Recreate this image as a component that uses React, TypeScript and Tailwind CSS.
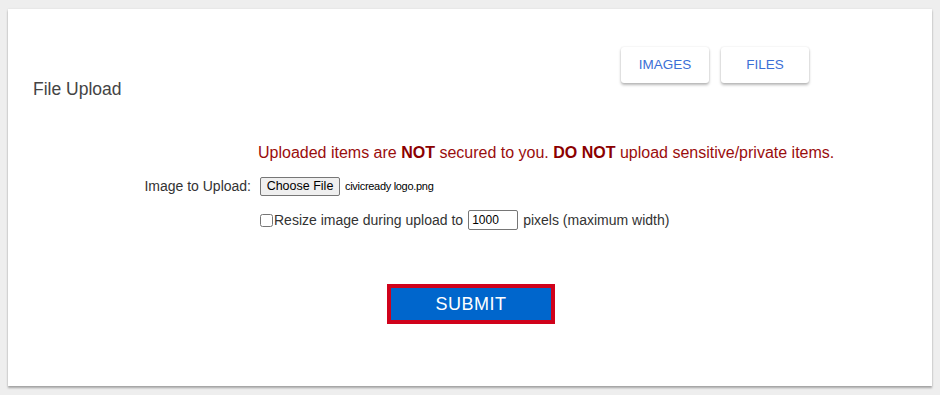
export default function App() {
  return (
    <div className="min-h-screen bg-[#eeeeee] px-[8px] pt-[9px] font-['Liberation_Sans',Arial,sans-serif]">
      <div className="h-[377px] w-[924px] bg-white shadow-[0_2px_2px_rgba(0,0,0,0.3),0_0_2px_rgba(0,0,0,0.08)]">
        {/* Header */}
        <div className="flex pt-[38px]">
          <h1 className="pl-[25px] pt-[32px] text-[17.5px] leading-[20px] text-[#444]">File Upload</h1>
          <div className="ml-auto mr-[123px] flex gap-[12px]">
            <button className="h-[36px] w-[88px] rounded-[3px] bg-white text-[13.5px] text-[#3b6fd6] shadow-[0_2px_3px_rgba(0,0,0,0.28),0_0_2px_rgba(0,0,0,0.1)]">
              IMAGES
            </button>
            <button className="h-[36px] w-[88px] rounded-[3px] bg-white text-[13.5px] text-[#3b6fd6] shadow-[0_2px_3px_rgba(0,0,0,0.28),0_0_2px_rgba(0,0,0,0.1)]">
              FILES
            </button>
          </div>
        </div>

        {/* Warning */}
        <p className="mt-[45px] pl-[250px] text-[16px] leading-[18px] text-[#9a0d0d]">
          Uploaded items are <b className="text-[#8b0000]">NOT</b> secured to you.{' '}
          <b className="text-[#8b0000]">DO NOT</b> upload sensitive/private items.
        </p>

        {/* Form rows */}
        <div className="mt-[14px] grid grid-cols-[243px_1fr] items-center gap-x-[9px] gap-y-[14px] text-[14px] text-[#333]">
          <label className="text-right leading-[20px]">Image to Upload:</label>
          <div className="flex h-[20px] items-center gap-[5px]">
            <button className="h-[19px] w-[80px] rounded-[2px] border border-[#767676] bg-[#efefef] text-[12.5px] leading-[16px] text-black">
              Choose File
            </button>
            <span className="text-[11px] tracking-[-0.3px] text-black">civicready logo.png</span>
          </div>

          <div />
          <div className="flex h-[20px] items-center">
            <input type="checkbox" className="m-0 mr-[1px] h-[13px] w-[13px]" />
            <span>Resize image during upload to</span>
            <input
              type="text"
              defaultValue="1000"
              className="ml-[5px] h-[20px] w-[50px] rounded-[2px] border border-[#767676] px-[3px] text-[12px] text-black"
            />
            <span className="ml-[5px]">pixels (maximum width)</span>
          </div>
        </div>

        {/* Submit */}
        <div className="mt-[54px] flex justify-center pl-[2px]">
          <button className="h-[40px] w-[168px] border-[4px] border-[#d0021b] bg-[#0066cc] text-[18px] tracking-[0.5px] text-white">
            SUBMIT
          </button>
        </div>
      </div>
    </div>
  );
}
